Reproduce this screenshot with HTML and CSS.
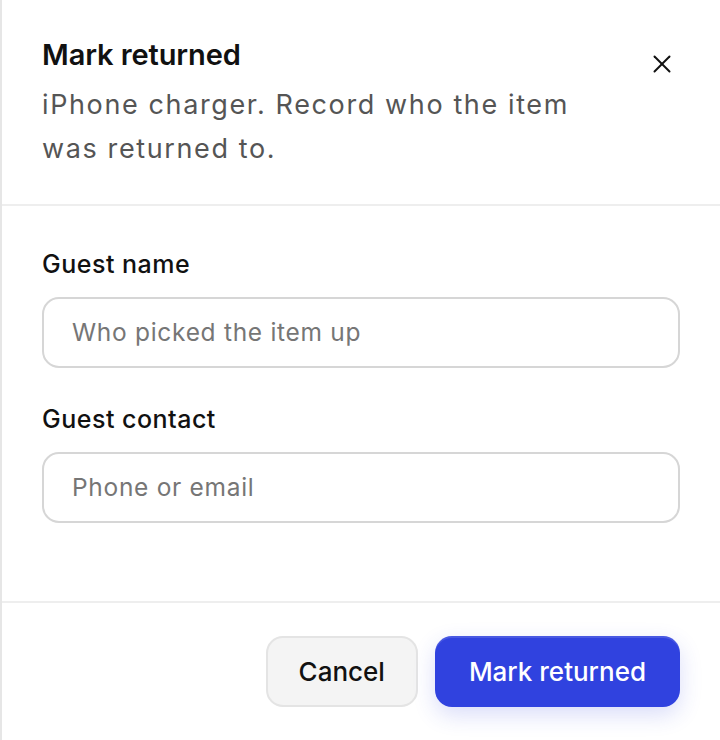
FILE: index.html
```html
<!DOCTYPE html>
<html lang="en">
<head>
<meta charset="utf-8">
<title>Mark returned</title>
<link rel="stylesheet" href="styles.css">
</head>
<body>
<aside class="panel">
  <header class="panel-header">
    <div class="heading">
      <h1 class="title">Mark returned</h1>
      <p class="subtitle">iPhone charger. Record who the item was returned to.</p>
    </div>
    <button class="close" type="button" aria-label="Close">
      <svg width="18" height="18" viewBox="0 0 18 18" fill="none" stroke="#111" stroke-width="2" stroke-linecap="round"><line x1="1.5" y1="1.5" x2="16.5" y2="16.5"/><line x1="16.5" y1="1.5" x2="1.5" y2="16.5"/></svg>
    </button>
  </header>
  <form class="panel-body">
    <label class="field">
      <span class="label">Guest name</span>
      <input class="input" type="text" placeholder="Who picked the item up">
    </label>
    <label class="field">
      <span class="label">Guest contact</span>
      <input class="input" type="text" placeholder="Phone or email">
    </label>
  </form>
  <footer class="panel-footer">
    <button class="btn btn-secondary" type="button">Cancel</button>
    <button class="btn btn-primary" type="button">Mark returned</button>
  </footer>
</aside>
</body>
</html>
```

FILE: styles.css
```css
* { box-sizing: border-box; }
html, body { margin: 0; padding: 0; background: #fff; }
body { font-family: Inter, "Noto Sans", sans-serif; color: #111; }

.panel {
  height: 740px;
  display: flex;
  flex-direction: column;
  border-left: 2px solid #e6e6e6;
  background: #fff;
}

.panel-header {
  display: flex;
  align-items: flex-start;
  gap: 16px;
  padding: 37px 40px 33px 40px;
  border-bottom: 2px solid #eeeeee;
}
.heading { flex: 1; min-width: 0; }
.title {
  margin: 0;
  font-size: 29px;
  line-height: 36px;
  font-weight: 600;
  color: #111;
  letter-spacing: -0.1px;
}
.subtitle {
  margin: 10px 0 0 0;
  max-width: 560px;
  font-size: 27px;
  line-height: 43.75px;
  letter-spacing: 1.62px;
  color: #555;
}
.close {
  width: 36px;
  height: 36px;
  margin-top: 9px;
  padding: 0;
  border: 0;
  background: transparent;
  display: flex;
  align-items: center;
  justify-content: center;
}

.panel-body {
  flex: 1;
  display: flex;
  flex-direction: column;
  gap: 33px;
  padding: 40px 40px 0 40px;
  margin: 0;
}
.field { display: flex; flex-direction: column; gap: 15px; }
.label {
  font-size: 25px;
  line-height: 36px;
  font-weight: 500;
  letter-spacing: 0.5px;
  color: #111;
}
.input {
  height: 71px;
  border: 2px solid #d6d6d6;
  border-radius: 17px;
  padding: 0 28px;
  font-family: Inter, "Noto Sans", sans-serif;
  font-size: 24.5px;
  letter-spacing: 0.7px;
  color: #111;
  background: #fff;
  outline: none;
}
.input::placeholder { color: #767676; }

.panel-footer {
  display: flex;
  justify-content: flex-end;
  gap: 17px;
  padding: 33px 40px 33px 40px;
  border-top: 2px solid #eeeeee;
}
.btn {
  height: 71px;
  border-radius: 17px;
  font-family: Inter, "Noto Sans", sans-serif;
  font-size: 26px;
  font-weight: 500;
  padding: 0 32px;
}
.btn-secondary {
  background: #f4f4f4;
  border: 2px solid #e4e4e4;
  color: #111;
  padding: 0 31px;
}
.btn-primary {
  background: #3042df;
  border: 0;
  color: #fff;
  padding: 0 34px;
  box-shadow: inset 0 2px 0 rgba(255,255,255,0.12), 0 8px 22px rgba(48,66,223,0.18);
}
```
